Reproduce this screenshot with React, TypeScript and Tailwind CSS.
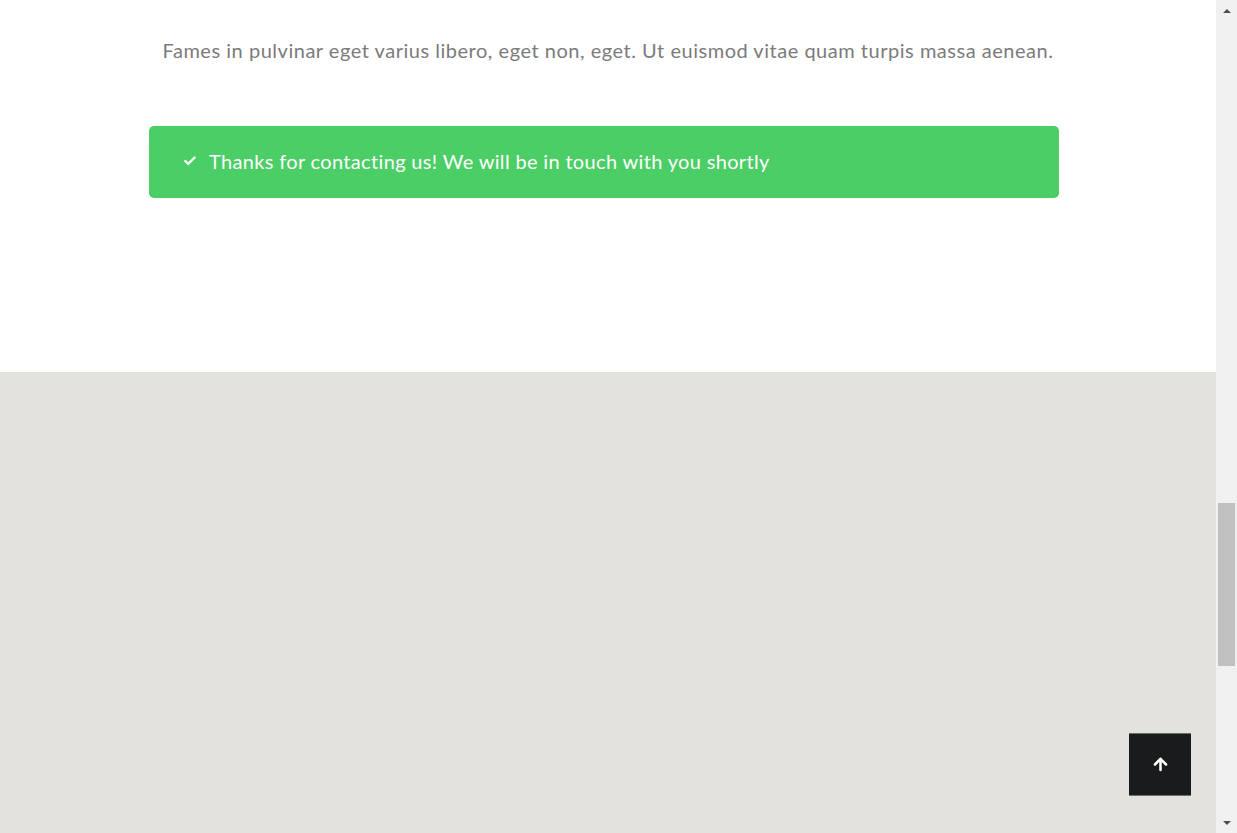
import { Check, ArrowUp } from "lucide-react";

function Scrollbar() {
  return (
    <div className="flex w-[21px] shrink-0 flex-col bg-[#f1f1f1]">
      <div className="flex h-[21px] items-center justify-center">
        <div className="h-0 w-0 border-x-[4px] border-b-[4px] border-x-transparent border-b-[#505050]" />
      </div>
      <div className="flex-1 pt-[482px]">
        <div className="mx-auto h-[163px] w-[17px] bg-[#c1c1c1]" />
      </div>
      <div className="flex h-[21px] items-center justify-center">
        <div className="h-0 w-0 border-x-[4px] border-t-[4px] border-x-transparent border-t-[#505050]" />
      </div>
    </div>
  );
}

export default function App() {
  return (
    <div
      className="flex h-[833px] w-full overflow-hidden"
      style={{ fontFamily: "Lato, 'Open Sans', sans-serif" }}
    >
      <div className="relative flex min-w-0 flex-1 flex-col">
        <section className="h-[372px] bg-white">
          <p className="pt-[36px] text-center text-[20px] leading-[28px] tracking-[0.52px] text-[#7b7b7b]">
            Fames in pulvinar eget varius libero, eget non, eget. Ut euismod vitae quam turpis massa aenean.
          </p>
          <div className="mx-auto mt-[62px] flex h-[72px] w-[910px] -translate-x-[4px] items-center rounded-[5px] bg-[#4bce65] pb-[3px] pl-[34px] text-white">
            <Check size={14} strokeWidth={4} className="mr-[12px]" />
            <span className="text-[20px] tracking-[0.34px]">
              Thanks for contacting us! We will be in touch with you shortly
            </span>
          </div>
        </section>
        <section className="flex-1 bg-[#e3e2df]" />
        <button className="absolute bottom-[37px] right-[25px] flex h-[63px] w-[62px] items-center justify-center border-y border-[#6f6f6f] bg-[#191b1c] text-white">
          <ArrowUp size={19} strokeWidth={3.2} />
        </button>
      </div>
      <Scrollbar />
    </div>
  );
}
